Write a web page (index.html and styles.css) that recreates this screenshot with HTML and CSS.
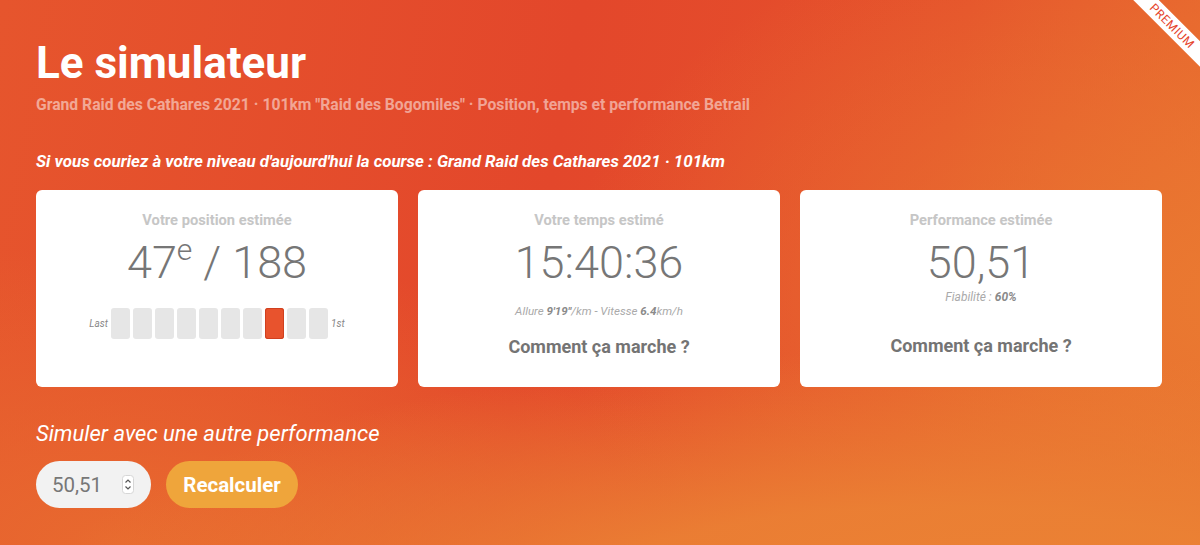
FILE: index.html
```html
<!DOCTYPE html>
<html lang="fr">
<head>
    <meta charset="UTF-8">
    <title>Le simulateur</title>
    <link rel="stylesheet" href="styles.css">
</head>
<body>
<div class="ribbon">PREMIUM</div>
<div class="page">
    <h1 class="title">Le simulateur</h1>
    <div class="subtitle">Grand Raid des Cathares 2021 · 101km "Raid des Bogomiles" · Position, temps et performance Betrail</div>
    <div class="intro">Si vous couriez à votre niveau d'aujourd'hui la course : Grand Raid des Cathares 2021 · 101km</div>

    <div class="cards">
        <div class="card">
            <div class="card-label">Votre position estimée</div>
            <div class="card-value">47<sup>e</sup> / 188</div>
            <div class="ranking">
                <span class="rank-end">Last</span>
                <div class="rank-bar">
                    <span></span><span></span><span></span><span></span><span></span>
                    <span></span><span></span><span class="on"></span><span></span><span></span>
                </div>
                <span class="rank-end">1st</span>
            </div>
        </div>
        <div class="card">
            <div class="card-label">Votre temps estimé</div>
            <div class="card-value">15:40:36</div>
            <div class="card-note pace">Allure <b>9'19"</b>/km - Vitesse <b>6.4</b>km/h</div>
            <a class="card-link" href="#">Comment ça marche ?</a>
        </div>
        <div class="card">
            <div class="card-label">Performance estimée</div>
            <div class="card-value">50,51</div>
            <div class="card-note reliability">Fiabilité : <b>60%</b></div>
            <a class="card-link" href="#">Comment ça marche ?</a>
        </div>
    </div>

    <div class="simulate">
        <div class="simulate-title">Simuler avec une autre performance</div>
        <div class="simulate-form">
            <div class="perf-input">
                <span>50,51</span>
                <svg class="spinner" width="12" height="19" viewBox="0 0 12 19">
                    <rect x="0.5" y="0.5" width="11" height="18" rx="3" fill="#fff" stroke="#d6d6d6"/>
                    <path d="M3.5 7.5 L6 5 L8.5 7.5" fill="none" stroke="#555" stroke-width="1.2"/>
                    <path d="M3.5 11.5 L6 14 L8.5 11.5" fill="none" stroke="#555" stroke-width="1.2"/>
                </svg>
            </div>
            <button class="recalc">Recalculer</button>
        </div>
    </div>
</div>
</body>
</html>
```

FILE: styles.css
```css
body, html {
    height: 100%;
    margin: 0;
    font-family: Roboto, "Liberation Sans", Arial, sans-serif;
    overflow: hidden;
}
body {
    position: relative;
    background:
        radial-gradient(ellipse 900px 260px at 78% 112%, #eb8234 0%, rgba(235,130,52,0.9) 40%, rgba(235,130,52,0) 100%),
        radial-gradient(ellipse 700px 420px at 105% 55%, #ea7a31 0%, rgba(234,122,49,0) 100%),
        radial-gradient(ellipse 600px 300px at 10% 100%, #e86a2f 0%, rgba(232,106,47,0) 100%),
        linear-gradient(100deg, #e6552d 0%, #e3472b 45%, #e5512c 75%, #e86a2f 100%);
}
.page {
    padding: 36px 36px 0 36px;
}
.title {
    margin: 0;
    font-size: 44px;
    line-height: 54px;
    font-weight: 700;
    color: #fff;
}
.subtitle {
    margin-top: 5px;
    font-size: 15.7px;
    line-height: 20px;
    font-weight: 700;
    color: rgba(255, 255, 255, 0.5);
}
.intro {
    margin-top: 36px;
    font-size: 16.9px;
    line-height: 20px;
    font-weight: 700;
    font-style: italic;
    color: #fff;
}
.cards {
    display: grid;
    grid-template-columns: repeat(3, 1fr);
    gap: 20px;
    margin-top: 19px;
    width: 1126px;
}
.card {
    background: #fff;
    border-radius: 6px;
    height: 197px;
    box-sizing: border-box;
    padding-top: 21px;
    text-align: center;
}
.card-label {
    font-size: 14.7px;
    line-height: 18px;
    font-weight: 700;
    color: #c6c6c6;
}
.card-value {
    margin-top: 7px;
    font-size: 45px;
    line-height: 54px;
    font-weight: 300;
    color: #767676;
}
.card-value sup {
    font-size: 30px;
    line-height: 0;
    vertical-align: 0;
    position: relative;
    top: -18px;
}
.ranking {
    display: flex;
    justify-content: center;
    align-items: center;
    gap: 3px;
    margin-top: 18px;
}
.rank-end {
    font-size: 10px;
    font-style: italic;
    color: #888;
}
.rank-bar {
    display: flex;
    gap: 3px;
}
.rank-bar span {
    width: 19px;
    height: 31px;
    border-radius: 3px;
    background: #e6e6e6;
}
.rank-bar span.on {
    background: #e8532d;
    box-shadow: inset 0 0 0 1px #d0401f;
}
.card-note {
    font-size: 11.6px;
    line-height: 14px;
    font-style: italic;
    color: #aaa;
}
.card-note b {
    color: #8a8a8a;
}
.pace {
    margin-top: 14px;
}
.reliability {
    font-size: 12px;
    margin-top: 0;
}
.card-link {
    display: block;
    font-size: 18px;
    font-weight: 700;
    color: #747474;
    text-decoration: none;
}
.pace + .card-link {
    margin-top: 18px;
}
.reliability + .card-link {
    margin-top: 31px;
}
.simulate {
    margin-top: 33px;
}
.simulate-title {
    font-size: 22px;
    line-height: 28px;
    font-style: italic;
    color: #fff;
}
.simulate-form {
    display: flex;
    gap: 15px;
    margin-top: 13px;
}
.perf-input {
    display: flex;
    align-items: center;
    justify-content: space-between;
    width: 115px;
    height: 47px;
    box-sizing: border-box;
    padding: 0 17px 0 16px;
    border-radius: 24px;
    background: #f2f2f2;
    font-size: 20.5px;
    color: #777;
}
.recalc {
    width: 132px;
    height: 47px;
    border: none;
    border-radius: 24px;
    background: #efa53b;
    color: #fff;
    font-family: Roboto, "Liberation Sans", Arial, sans-serif;
    font-size: 20.5px;
    font-weight: 700;
}
.ribbon {
    position: absolute;
    top: 17px;
    right: -37px;
    width: 130px;
    transform: rotate(45deg);
    background: #fff;
    color: #e5432a;
    text-align: center;
    font-size: 12px;
    line-height: 18px;
    letter-spacing: 0.5px;
}
```
